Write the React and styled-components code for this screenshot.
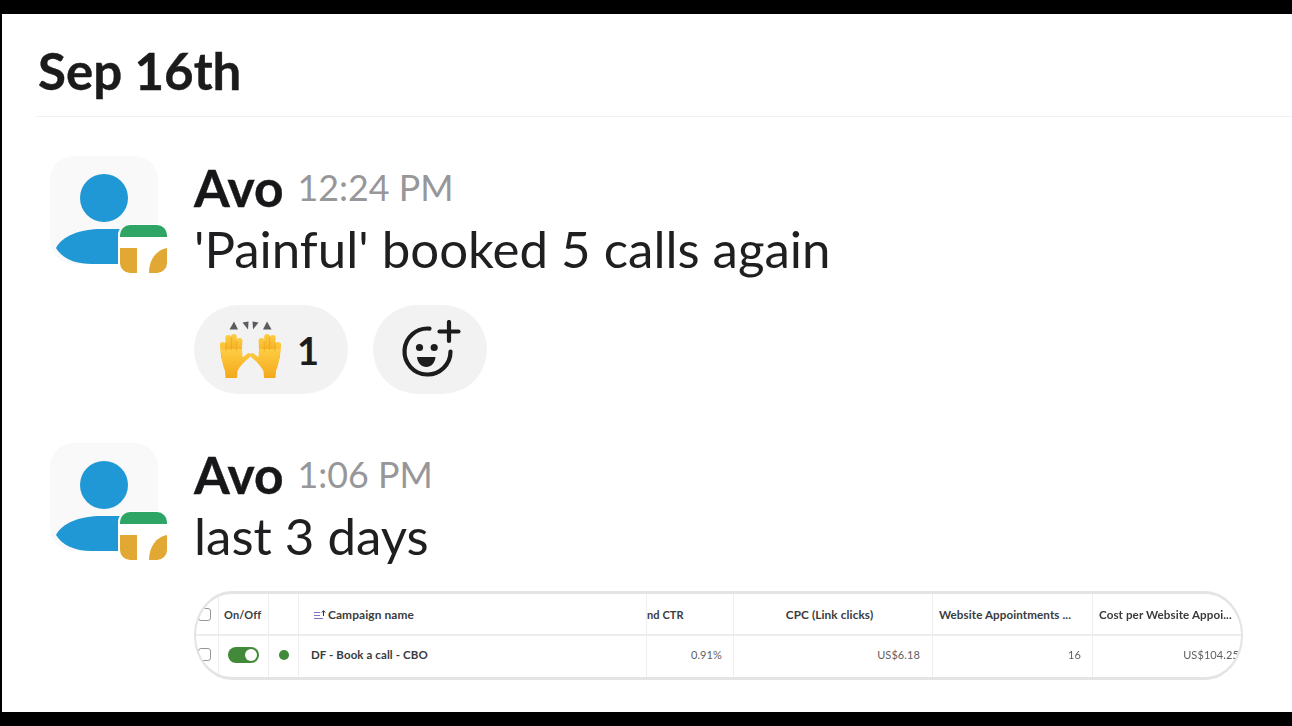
import React from "react";
import styled, { createGlobalStyle } from "styled-components";

const Global = createGlobalStyle`
  html, body { margin: 0; padding: 0; background: #000; }
  body { font-family: Lato, "Open Sans", sans-serif; color: #1d1c1d; }
`;

const Frame = styled.div`
  width: 1292px;
  height: 726px;
  box-sizing: border-box;
  padding: 14px 0 14px 2px;
  background: #000;
  overflow: hidden;
`;

const Sheet = styled.main`
  height: 698px;
  background: #fff;
  overflow: hidden;
`;

const DateHeader = styled.h1`
  margin: 0 0 0 34px;
  height: 103px;
  box-sizing: border-box;
  padding: 27px 0 0 2px;
  font-size: 51px;
  line-height: 60px;
  font-weight: 700;
  color: #1b1b1c;
  -webkit-text-stroke: 0.4px #1b1b1c;
  border-bottom: 1px solid #f0f0f0;
`;

const Message = styled.article`
  display: grid;
  grid-template-columns: 108px 1fr;
  column-gap: 36px;
  padding: 0 48px;
  margin-top: ${(p) => p.$top}px;
`;

const AvatarBox = styled.div`
  position: relative;
  width: 120px;
  height: 120px;
`;

const NameRow = styled.div`
  display: flex;
  align-items: flex-start;
  gap: 14px;
  height: 63px;
`;

const Name = styled.span`
  font-size: 51.5px;
  line-height: 62px;
  font-weight: 700;
  color: #17171a;
  -webkit-text-stroke: 0.4px #17171a;
`;

const Time = styled.time`
  font-size: 35.8px;
  line-height: 62px;
  color: #97979a;
  margin-top: 1px;
`;

const Body = styled.p`
  margin: 0;
  font-size: 51px;
  line-height: 60px;
  color: #1f1f21;
`;

const Reactions = styled.div`
  display: flex;
  gap: 25px;
  margin-top: 26px;
`;

const Pill = styled.button`
  display: flex;
  align-items: center;
  justify-content: ${(p) => (p.$count ? "flex-start" : "center")};
  gap: 16px;
  width: ${(p) => p.$w}px;
  height: 89px;
  padding: 0 0 0 ${(p) => (p.$count ? 26 : 0)}px;
  border: 0;
  border-radius: 45px;
  background: #f2f2f3;
  font: 700 38px/1 Lato, sans-serif;
  color: #1d1c1d;
`;

const TableShot = styled.div`
  width: 1049px;
  height: 89px;
  margin-top: 25px;
  box-sizing: border-box;
  border: 2px solid #e4e4e4;
  border-top-width: 3px;
  border-bottom-width: 3px;
  border-radius: 38px / 44px;
  overflow: hidden;
  background: #fff;
  filter: blur(0.45px);
`;

const Row = styled.div`
  display: grid;
  grid-template-columns: 23px 50px 30px 348px 87px 199px 160px 151px;
  height: ${(p) => p.$h}px;
  border-bottom: ${(p) => (p.$head ? "2px solid #ececec" : "0")};
  box-sizing: border-box;
`;

const Cell = styled.div`
  display: flex;
  align-items: center;
  justify-content: ${(p) => p.$justify || "flex-start"};
  box-sizing: border-box;
  height: ${(p) => (p.$tall ? 41 : 40)}px;
  padding: ${(p) => p.$pad || "0"};
  padding-bottom: ${(p) => (p.$tall ? 4 : 0)}px;
  border-right: ${(p) => (p.$last ? "0" : "1px solid #eeeeee")};
  font-size: ${(p) => p.$size || 11}px;
  font-weight: ${(p) => (p.$bold ? 700 : 400)};
  color: ${(p) => (p.$bold ? "#3a3b3d" : "#5f6064")};
  white-space: nowrap;
  overflow: hidden;
  letter-spacing: 0.1px;
`;

const Check = styled.span`
  display: block;
  width: 13px;
  height: 13px;
  flex: none;
  margin-left: 2px;
  box-sizing: border-box;
  border: 1px solid #979797;
  border-radius: 3px;
`;

const Toggle = styled.span`
  display: flex;
  justify-content: flex-end;
  align-items: center;
  width: 31px;
  height: 16px;
  padding: 2px;
  box-sizing: border-box;
  border-radius: 8px;
  background: #43893a;
  &::after {
    content: "";
    width: 12px;
    height: 12px;
    border-radius: 50%;
    background: #fff;
  }
`;

const Dot = styled.span`
  width: 10px;
  height: 10px;
  border-radius: 50%;
  background: #3f8a3b;
`;

const SortIcon = styled.svg`
  width: 14px;
  height: 11px;
  margin-right: 1px;
  flex: none;
`;

function Avatar() {
  return (
    <AvatarBox>
      <svg width="120" height="120" viewBox="0 0 120 120" aria-hidden="true">
        <rect x="0" y="0" width="108" height="108" rx="24" fill="#f9f9f9" />
        <circle cx="54" cy="42" r="24" fill="#2098d5" />
        <path d="M6 92 C12 80 30 73 52 73 L76 73 L76 108 L42 108 C24 108 12 102 6 92 Z" fill="#2098d5" />
        <rect x="68" y="68" width="50" height="50" rx="11" fill="#fff" />
        <path d="M70 81 V79 a10 10 0 0 1 10 -10 H107 a10 10 0 0 1 10 10 V81 Z" fill="#2fa565" />
        <path d="M70 92 H87 V117 H80 a10 10 0 0 1 -10 -10 Z" fill="#e2a834" />
        <path d="M99 117 C99 104 106 94 117 92 V107 a10 10 0 0 1 -10 10 Z" fill="#e2a834" />
      </svg>
    </AvatarBox>
  );
}

function Hand({ flip }) {
  return (
    <g transform={flip ? "translate(61 0) scale(-1 1)" : undefined}>
      <g fill="url(#handFill)">
        <rect x="0.5" y="21" width="6" height="18" rx="3" transform="rotate(-6 3 30)" />
        <rect x="5.7" y="14" width="5.8" height="20" rx="2.9" transform="rotate(-3 8 24)" />
        <rect x="11" y="13" width="5.8" height="20" rx="2.9" />
        <rect x="16.3" y="17" width="5.8" height="18" rx="2.9" transform="rotate(3 19 26)" />
        <path d="M1 28 L22 28 L22.5 36 C24 36 27 32 29 32 C31 32 31.5 35 29.5 36.5 C25 40 20 45 17.5 50 L17 57 H5.5 L5 50 C2.5 44 1 36 1 28 Z" />
      </g>
      <path d="M6 21 V30 M11.3 16 V29 M16.7 20 V30" stroke="#e9a11a" strokeWidth="0.7" fill="none" />
    </g>
  );
}

function RaisedHands() {
  return (
    <svg width="61" height="57" viewBox="0 0 61 57" aria-hidden="true">
      <defs>
        <linearGradient id="handFill" x1="0" y1="0" x2="0" y2="1">
          <stop offset="0" stopColor="#fdcd42" />
          <stop offset="1" stopColor="#f4a81c" />
        </linearGradient>
      </defs>
      <g fill="#5c5c60">
        <path d="M14 0.5 L18 8.5 H9.5 Z" />
        <path d="M22.5 1.5 L28.5 0.5 L28 8.5 Z" />
        <path d="M32.5 0.5 L38.5 1.5 L33 8.5 Z" />
        <path d="M47 0.5 L51.5 8.5 H43 Z" />
      </g>
      <Hand />
      <Hand flip />
    </svg>
  );
}

function AddReaction() {
  return (
    <svg width="64" height="60" viewBox="0 0 64 60" fill="none" aria-hidden="true">
      <path d="M31.5 8.6 A 23 23 0 1 0 52.5 31.5" stroke="#1d1c1d" strokeWidth="4.2" strokeLinecap="round" />
      <path d="M51 2 V21 M41.5 11.5 H60.5" stroke="#1d1c1d" strokeWidth="4.2" strokeLinecap="round" />
      <circle cx="21.5" cy="27.5" r="3.6" fill="#1d1c1d" />
      <circle cx="36.2" cy="27.5" r="3.6" fill="#1d1c1d" />
      <path d="M19 37 H37.5 C37 43 33 47 28.3 47 C23.5 47 19.5 43 19 37 Z" fill="#1d1c1d" />
    </svg>
  );
}

function CampaignTable() {
  return (
    <TableShot>
      <Row $head $h={42}>
        <Cell><Check /></Cell>
        <Cell $bold $pad="0 0 0 5px">On/Off</Cell>
        <Cell />
        <Cell $bold $size={11.9} $pad="0 0 0 14px">
          <SortIcon viewBox="0 0 14 11" aria-hidden="true">
            <path d="M1 3.5H7M1 6.5H7M1 9.5H10" stroke="#7d73c9" strokeWidth="1" />
            <path d="M10.5 7V2M8.8 3.6L10.5 1.6L12.2 3.6" stroke="#33343a" strokeWidth="1" fill="none" />
          </SortIcon>
          Campaign name
        </Cell>
        <Cell $bold>nd CTR</Cell>
        <Cell $bold $size={11.8} $justify="center" $pad="0 7px 0 0">CPC (Link clicks)</Cell>
        <Cell $bold $size={11.6} $pad="0 0 0 6px">Website Appointments ...</Cell>
        <Cell $bold $size={11.6} $pad="0 0 0 6px" $last>Cost per Website Appoi...</Cell>
      </Row>
      <Row $h={41}>
        <Cell $tall><Check /></Cell>
        <Cell $tall $justify="center"><Toggle /></Cell>
        <Cell $tall $justify="center"><Dot /></Cell>
        <Cell $tall $bold $size={11.5} $pad="0 0 0 12px">DF - Book a call - CBO</Cell>
        <Cell $tall $justify="flex-end" $pad="0 11px 0 0">0.91%</Cell>
        <Cell $tall $justify="flex-end" $pad="0 12px 0 0">US$6.18</Cell>
        <Cell $tall $justify="flex-end" $pad="0 11px 0 0">16</Cell>
        <Cell $tall $justify="flex-end" $pad="0 5px 0 0" $last>US$104.25</Cell>
      </Row>
    </TableShot>
  );
}

export default function App() {
  return (
    <Frame>
      <Global />
      <Sheet>
        <DateHeader>Sep 16th</DateHeader>
        <Message $top={39}>
          <Avatar />
          <div>
            <NameRow>
              <Name>Avo</Name>
              <Time>12:24 PM</Time>
            </NameRow>
            <Body>'Painful' booked 5 calls again</Body>
            <Reactions>
              <Pill $count $w={154}>
                <RaisedHands />
                1
              </Pill>
              <Pill $w={114}>
                <AddReaction />
              </Pill>
            </Reactions>
          </div>
        </Message>
        <Message $top={49}>
          <Avatar />
          <div>
            <NameRow>
              <Name>Avo</Name>
              <Time>1:06 PM</Time>
            </NameRow>
            <Body>last 3 days</Body>
            <CampaignTable />
          </div>
        </Message>
      </Sheet>
    </Frame>
  );
}
